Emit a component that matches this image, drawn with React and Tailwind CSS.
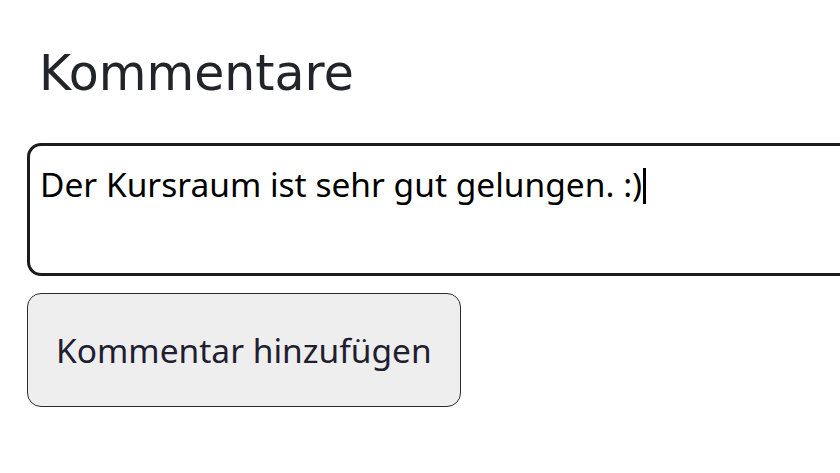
export default function App() {
  return (
    <div className="h-screen w-full overflow-hidden bg-white pl-[27px] pt-[44px]">
      <h2 className="pl-[12px] text-[49px] leading-[60px] text-[#212529] [font-family:'DejaVu_Sans',sans-serif]">
        Kommentare
      </h2>

      <div className="mt-[39px] h-[133px] w-[900px] rounded-[14px] border-[3px] border-[#1c1c1c] px-[10px] pt-[15px] text-[33.5px] leading-[40px] text-black [font-family:'Noto_Sans',sans-serif]">
        Der Kursraum ist sehr gut gelungen. :)
        <span className="ml-[1px] inline-block h-[36px] w-[3px] translate-y-[7px] bg-black" />
      </div>

      <button
        type="button"
        className="mt-[17px] h-[114px] rounded-[14px] border border-[#2a2a35] bg-[#eeeeee] px-[28px] text-[33.5px] text-[#1e2030] [font-family:'Noto_Sans',sans-serif]"
      >
        Kommentar hinzufügen
      </button>
    </div>
  );
}
